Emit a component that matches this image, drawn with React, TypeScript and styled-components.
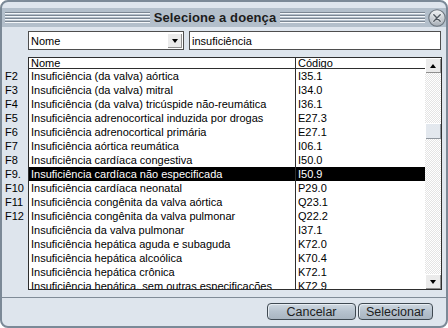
import React from 'react'
import styled, { createGlobalStyle } from 'styled-components'

const GlobalStyle = createGlobalStyle`
  html, body {
    margin: 0;
    padding: 0;
    background: #ffffff;
  }
  * {
    box-sizing: border-box;
  }
`

const ROW_H = 14

const Window = styled.div`
  width: 448px;
  height: 328px;
  border: 2px solid #7b8997;
  border-radius: 8px;
  background: #dee5ed;
  display: flex;
  flex-direction: column;
  overflow: hidden;
  font-family: "Liberation Sans", Arial, sans-serif;
  color: #000;
`

const TitleBar = styled.div`
  margin-top: 6px;
  height: 19px;
  background: #b3bfcb;
  display: flex;
  align-items: center;
  padding: 0 0 0 3px;
`

const Stripes = styled.div`
  flex: 1;
  height: 11px;
  background: repeating-linear-gradient(
    to bottom,
    #7c8793 0 1px,
    #f4f7fa 1px 2px,
    #b3bfcb 2px 3px
  );
`

const TitleText = styled.div`
  padding: 0 4px 0 4px;
  font-size: 13px;
  font-weight: bold;
  color: #1c1c1c;
  letter-spacing: 0.1px;
  white-space: nowrap;
`

const CloseButton = styled.div`
  width: 18px;
  height: 18px;
  margin-left: 3px;
  display: flex;
`

const Toolbar = styled.div`
  display: flex;
  gap: 5px;
  padding: 4px 5px 0 26px;
  height: 23px;
`

const Combo = styled.div`
  width: 156px;
  height: 19px;
  border: 1px solid #4e4e4e;
  background: #fff;
  display: flex;
  align-items: center;
  padding: 1px;
`

const FieldText = styled.span`
  flex: 1;
  font-size: 11px;
  padding-left: 1px;
  white-space: nowrap;
`

const ArrowBox = styled.div`
  width: 15px;
  height: 15px;
  background: #ebebeb;
  box-shadow: inset 1px 1px #ffffff, inset -1px -1px #8f8f8f;
  display: flex;
  align-items: center;
  justify-content: center;
`

const Triangle = styled.span<{ $up?: boolean }>`
  width: 0;
  height: 0;
  border-left: 3.5px solid transparent;
  border-right: 3.5px solid transparent;
  ${(p) => (p.$up ? 'border-bottom: 4px solid #000;' : 'border-top: 4px solid #000;')}
`

const SearchInput = styled.div`
  flex: 1;
  height: 19px;
  border: 1px solid #4e4e4e;
  background: #fff;
  display: flex;
  align-items: center;
  padding: 0 1px;
`

const Main = styled.div`
  display: flex;
  margin-top: 7px;
  padding-right: 4px;
`

const KeyColumn = styled.div`
  width: 26px;
  padding-top: 12px;
  padding-left: 3px;
`

const Key = styled.div`
  height: ${ROW_H}px;
  line-height: ${ROW_H}px;
  font-size: 11px;
  white-space: nowrap;
`

const Table = styled.div`
  flex: 1;
  height: 233px;
  border: 1px solid #2e2e2e;
  display: flex;
  background: #fff;
`

const Grid = styled.div`
  flex: 1;
  display: flex;
  flex-direction: column;
  overflow: hidden;
`

const HeaderRow = styled.div`
  height: 11px;
  flex-shrink: 0;
  display: grid;
  grid-template-columns: 267px 1fr;
  border-bottom: 1px solid #2e2e2e;
  background: #fff;
`

const Cell = styled.div<{ $divider?: boolean }>`
  font-size: 11px;
  white-space: nowrap;
  overflow: hidden;
  padding-left: 2px;
  ${(p) => (p.$divider ? 'border-right: 1px solid #2e2e2e;' : '')}
`

const HeaderCell = styled(Cell)`
  line-height: 10px;
`

const Body = styled.div`
  flex: 1;
  overflow: hidden;
`

const Row = styled.div<{ $selected?: boolean }>`
  height: ${ROW_H}px;
  line-height: ${ROW_H}px;
  display: grid;
  grid-template-columns: 267px 1fr;
  background: ${(p) => (p.$selected ? '#000' : '#fff')};
  color: ${(p) => (p.$selected ? '#fff' : '#000')};
`

const ScrollBar = styled.div`
  width: 16px;
  display: flex;
  flex-direction: column;
`

const ScrollButton = styled.div`
  height: 15px;
  background: #ebebeb;
  box-shadow: inset 1px 1px #ffffff, inset -1px -1px #8f8f8f;
  display: flex;
  align-items: center;
  justify-content: center;
`

const Track = styled.div`
  flex: 1;
  background-color: #ffffff;
  background-image: conic-gradient(#e4e4e4 25%, #ffffff 0 50%, #e4e4e4 0 75%, #ffffff 0);
  background-size: 2px 2px;
`

const Thumb = styled.div`
  height: 16px;
  background: #e3e8ee;
  box-shadow: inset 1px 1px #ffffff, inset -1px -1px #8f969e;
`

const Separator = styled.div`
  margin-top: 7px;
  height: 1px;
  background: #7f8b97;
`

const Footer = styled.div`
  flex: 1;
  display: flex;
  justify-content: flex-end;
  align-items: flex-start;
  gap: 2px;
  padding: 5px 13px 0 0;
`

const Button = styled.button<{ $w: number }>`
  width: ${(p) => p.$w}px;
  height: 17px;
  border: 1px solid #3f4952;
  border-radius: 4px;
  background: linear-gradient(to bottom, #cfd8e1 0%, #b6c2ce 50%, #a9b5c1 100%);
  box-shadow: inset 1px 1px #e6ecf2;
  font-family: "Liberation Sans", Arial, sans-serif;
  font-size: 12.5px;
  color: #1e1e1e;
  padding: 0;
  line-height: 14px;
`

const rows: [string, string][] = [
  ['Insuficiência (da valva) aórtica', 'I35.1'],
  ['Insuficiência (da valva) mitral', 'I34.0'],
  ['Insuficiência (da valva) tricúspide não-reumática', 'I36.1'],
  ['Insuficiência adrenocortical induzida por drogas', 'E27.3'],
  ['Insuficiência adrenocortical primária', 'E27.1'],
  ['Insuficiência aórtica reumática', 'I06.1'],
  ['Insuficiência cardíaca congestiva', 'I50.0'],
  ['Insuficiência cardíaca não especificada', 'I50.9'],
  ['Insuficiência cardíaca neonatal', 'P29.0'],
  ['Insuficiência congênita da valva aórtica', 'Q23.1'],
  ['Insuficiência congênita da valva pulmonar', 'Q22.2'],
  ['Insuficiência da valva pulmonar', 'I37.1'],
  ['Insuficiência hepática aguda e subaguda', 'K72.0'],
  ['Insuficiência hepática alcoólica', 'K70.4'],
  ['Insuficiência hepática crônica', 'K72.1'],
  ['Insuficiência hepática, sem outras especificações', 'K72.9'],
]

const keys = ['F2', 'F3', 'F4', 'F5', 'F6', 'F7', 'F8', 'F9.', 'F10', 'F11', 'F12']
const selected = 7
const thumbOffset = 50

const CloseIcon = () => (
  <svg width="18" height="18" viewBox="0 0 18 18">
    <defs>
      <linearGradient id="cg" x1="0" y1="0" x2="0" y2="1">
        <stop offset="0" stopColor="#f2f4f6" />
        <stop offset="1" stopColor="#a6aeb6" />
      </linearGradient>
    </defs>
    <circle cx="9" cy="9" r="8.2" fill="url(#cg)" stroke="#6b747d" strokeWidth="1.1" />
    <path d="M5.8 5.8 L12.2 12.2 M12.2 5.8 L5.8 12.2" stroke="#ffffff" strokeWidth="2.6" strokeLinecap="round" opacity="0.7" />
    <path d="M5.8 5.8 L12.2 12.2 M12.2 5.8 L5.8 12.2" stroke="#505860" strokeWidth="1.5" strokeLinecap="round" />
  </svg>
)

export default function App() {
  return (
    <>
      <GlobalStyle />
      <Window>
        <TitleBar>
          <Stripes />
          <TitleText>Selecione a doença</TitleText>
          <Stripes />
          <CloseButton>
            <CloseIcon />
          </CloseButton>
        </TitleBar>

        <Toolbar>
          <Combo>
            <FieldText>Nome</FieldText>
            <ArrowBox>
              <Triangle />
            </ArrowBox>
          </Combo>
          <SearchInput>
            <FieldText>insuficiência</FieldText>
          </SearchInput>
        </Toolbar>

        <Main>
          <KeyColumn>
            {keys.map((k) => (
              <Key key={k}>{k}</Key>
            ))}
          </KeyColumn>
          <Table>
            <Grid>
              <HeaderRow>
                <HeaderCell $divider>Nome</HeaderCell>
                <HeaderCell>Código</HeaderCell>
              </HeaderRow>
              <Body>
                {rows.map(([name, code], i) => (
                  <Row key={code} $selected={i === selected}>
                    <Cell $divider>{name}</Cell>
                    <Cell>{code}</Cell>
                  </Row>
                ))}
              </Body>
            </Grid>
            <ScrollBar>
              <ScrollButton>
                <Triangle $up />
              </ScrollButton>
              <Track>
                <Thumb style={{ marginTop: thumbOffset }} />
              </Track>
              <ScrollButton>
                <Triangle />
              </ScrollButton>
            </ScrollBar>
          </Table>
        </Main>

        <Separator />
        <Footer>
          <Button $w={89}>Cancelar</Button>
          <Button $w={75}>Selecionar</Button>
        </Footer>
      </Window>
    </>
  )
}
